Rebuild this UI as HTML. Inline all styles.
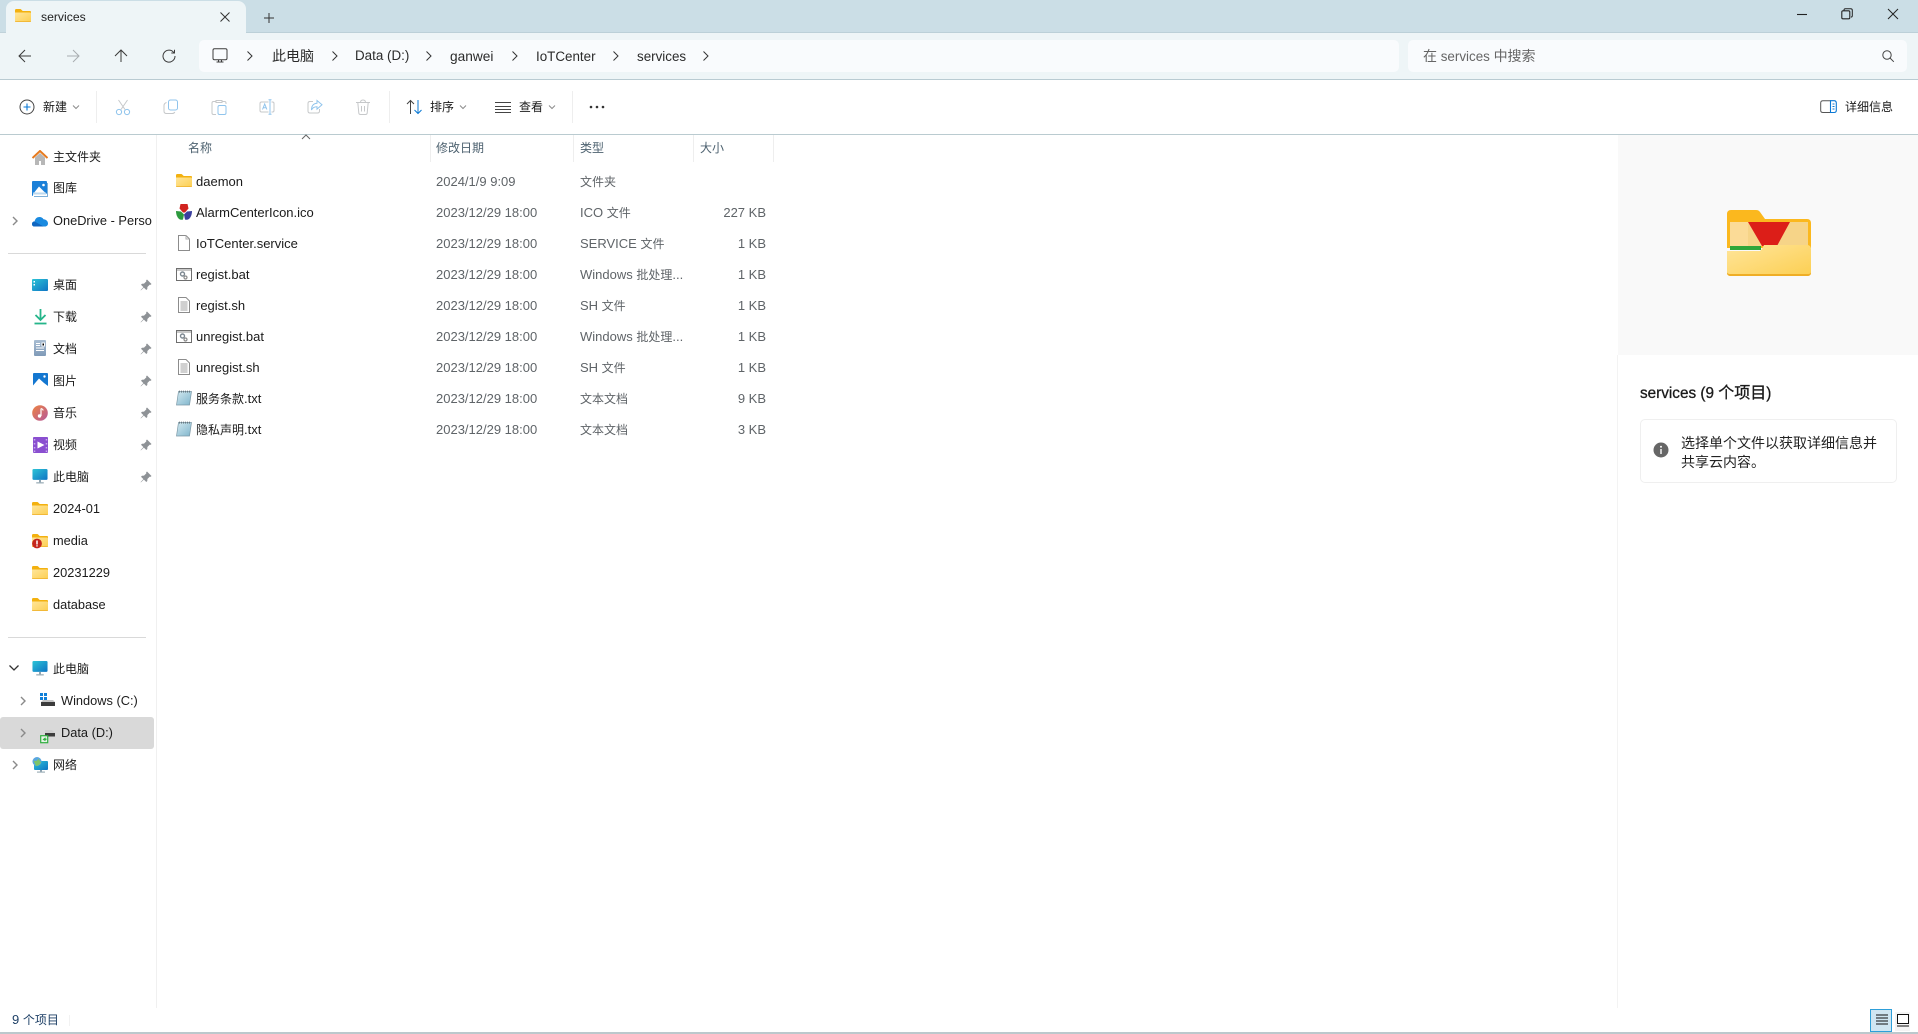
<!DOCTYPE html>
<html lang="zh"><head><meta charset="utf-8"><title>services</title>
<style>
html,body{margin:0;padding:0}
body{width:1918px;height:1034px;overflow:hidden;background:#fff;position:relative;font-family:"Liberation Sans","Noto Sans CJK SC",sans-serif;font-size:13px;color:#1b1b1b}
div,svg,span.t{position:absolute}
.t{white-space:nowrap;line-height:20px;height:20px}
.c{font-size:12px}
.g{color:#5f6468}
.h{color:#4e6270}
.n{font-size:12.800px}
.a{font-size:13.400px;color:#2b2b2b}
.a .z{font-size:14px}
.s{background:#eeeeee;width:1px}
.hr{background:#d9d9d9;height:1px;left:8px;width:138px}
</style></head><body>
<svg width="0" height="0" style="position:absolute">
<defs>
<linearGradient id="fg" x1="0" y1="0" x2="1" y2="1"><stop offset="0" stop-color="#ffe59a"/><stop offset="1" stop-color="#fccf52"/></linearGradient>
<linearGradient id="mon" x1="0" y1="0" x2="1" y2="1"><stop offset="0" stop-color="#2cc4d6"/><stop offset="1" stop-color="#0f74c4"/></linearGradient>
<linearGradient id="mus" x1="0" y1="0" x2="1" y2="1"><stop offset="0" stop-color="#ee8340"/><stop offset="1" stop-color="#b5589c"/></linearGradient>
<linearGradient id="doc" x1="0" y1="0" x2="0" y2="1"><stop offset="0" stop-color="#a9bdd2"/><stop offset="1" stop-color="#7f9ab8"/></linearGradient>
<linearGradient id="txt" x1="0" y1="0" x2="1" y2="1"><stop offset="0" stop-color="#d3e9f0"/><stop offset="1" stop-color="#7fb5cc"/></linearGradient>
<symbol id="folder" viewBox="0 0 16 13"><path d="M0 1.200C0 .5.5 0 1.200 0h4c.4 0 .7.2 1 .5L7.700 2H15c.6 0 1 .4 1 1v2H0z" fill="#f3b10f"/><path d="M0 3.500h15c.6 0 1 .4 1 1V12c0 .6-.4 1-1 1H1c-.6 0-1-.4-1-1z" fill="url(#fg)"/><path d="M0 12.200h16V12.200c0 .5-.4.8-1 .8H1c-.6 0-1-.3-1-.8z" fill="#eeb02a"/></symbol>
<symbol id="pin" viewBox="0 0 12 12"><path d="M7 .5 11.500 5 10.600 5.900 9.800 5.600 7.400 8 7.300 10 6.300 11 3.900 8.600.9 11.400.6 11.100 3.400 8.100 1 5.700 2 4.700 4 4.600 6.400 2.200 6.100 1.400z" fill="#8e9296"/></symbol>
<symbol id="chev" viewBox="0 0 10 10"><path d="M3 1 7 5 3 9" fill="none" stroke="#8a8a8a" stroke-width="1.400"/></symbol>
<symbol id="bc" viewBox="0 0 10 12"><path d="M2.500 1.500 7 6 2.500 10.500" fill="none" stroke="#333" stroke-width="1"/></symbol>
<symbol id="dd" viewBox="0 0 8 6"><path d="M1 1.500 4 4.500 7 1.500" fill="none" stroke="#8c8c8c" stroke-width="1"/></symbol>
<symbol id="pc" viewBox="0 0 16 17"><rect x="0" y="0" width="16" height="11.500" rx="1.200" fill="url(#mon)"/><rect x="7" y="11.500" width="2" height="3" fill="#8aa0ad"/><rect x="4" y="14" width="8" height="1.400" fill="#9fb0ba"/></symbol>
<symbol id="bat" viewBox="0 0 16 13"><rect x=".5" y=".5" width="15" height="12" fill="#fff" stroke="#6e6e6e"/><rect x="1" y="1" width="14" height="2" fill="#c9c9c9"/><circle cx="6.500" cy="6" r="2" fill="none" stroke="#7c8790" stroke-width="1.400"/><circle cx="9.500" cy="9.500" r="1.500" fill="none" stroke="#8b8b8b" stroke-width="1.200"/></symbol>
<symbol id="sh" viewBox="0 0 12 16"><path d="M.5.500h7.500l3.500 3.500v11.500H.5z" fill="#fff" stroke="#8c8c8c"/><path d="M2.500 5h7M2.500 7h7M2.500 9h7M2.500 11h7M2.500 13h7" stroke="#a0a0a0"/></symbol>
<symbol id="note" viewBox="0 0 16 16"><path d="M2.500 1.500H15.500L13.500 15H.5z" fill="url(#txt)" stroke="#7b98a6" stroke-width=".7"/><path d="M3.500 .6v2M5.500 .6v2M7.500 .6v2M9.500 .6v2M11.500 .6v2M13.500 .6v2" stroke="#5e6d75" stroke-width=".8"/></symbol>
</defs></svg>

<!-- title bar -->
<div style="left:0;top:0;width:1918px;height:32px;background:#cbdee6"></div>
<div style="left:6px;top:1px;width:240px;height:32px;background:#eef5f7;border-radius:8px 8px 0 0"></div>
<svg style="left:15px;top:9px" width="16" height="13"><use href="#folder"/></svg>
<span class="t" style="left:41px;top:7px;font-size:12.200px;color:#222">services</span>
<svg style="left:219px;top:11px" width="12" height="12"><path d="M1.500 1.500l9 9m0-9l-9 9" stroke="#333" stroke-width="1"/></svg>
<svg style="left:263px;top:12px" width="12" height="12"><path d="M6 1v10M1 6h10" stroke="#333" stroke-width="1"/></svg>
<svg style="left:1796px;top:9px" width="12" height="12"><path d="M1 5.500h10" stroke="#222" stroke-width="1.100"/></svg>
<svg style="left:1841px;top:8px" width="12" height="12"><path d="M3 2.500V2c0-.8.5-1.300 1.300-1.300h5.400c1 0 1.600.6 1.600 1.600v5.400c0 .8-.5 1.300-1.300 1.300" fill="none" stroke="#222"/><rect x=".8" y="2.800" width="8" height="8" rx="1.200" fill="none" stroke="#222" stroke-width="1.100"/></svg>
<svg style="left:1887px;top:8px" width="12" height="12"><path d="M1 1l10 10m0-10L1 11" stroke="#222" stroke-width="1"/></svg>

<!-- address row -->
<div style="left:0;top:32px;width:1918px;height:47px;background:#eef5f7"></div>
<div style="left:0;top:32px;width:6px;height:1px;background:#c0d2da"></div>
<div style="left:246px;top:32px;width:1672px;height:1px;background:#bcd0d8"></div>
<div style="left:0;top:79px;width:1918px;height:1px;background:#b9cbd2"></div>
<svg style="left:18px;top:49px" width="14" height="14"><path d="M13 7H1.500M7 1 1 7l6 6" fill="none" stroke="#3a3a3a" stroke-width="1"/></svg>
<svg style="left:66px;top:49px" width="14" height="14"><path d="M1 7h11.500M7 1l6 6-6 6" fill="none" stroke="#a8adb0" stroke-width="1"/></svg>
<svg style="left:114px;top:49px" width="14" height="14"><path d="M7 13V1.500M1 7l6-6 6 6" fill="none" stroke="#3a3a3a" stroke-width="1"/></svg>
<svg style="left:162px;top:49px" width="14" height="14"><path d="M11.800 3.500A6 6 0 1 0 13 7M12.500 .8v3.200H9.300" fill="none" stroke="#3a3a3a" stroke-width="1"/></svg>
<div style="left:199px;top:40px;width:1200px;height:32px;background:#f9fbfd;border-radius:5px"></div>
<svg style="left:212px;top:48px" width="16" height="16"><rect x="1" y=".8" width="14" height="11" rx="1.500" fill="none" stroke="#3d3d3d"/><path d="M4.500 14h7M6.500 12v2M9.500 12v2" stroke="#3d3d3d"/></svg>
<svg style="left:245px;top:50px" width="10" height="12"><use href="#bc"/></svg>
<span class="t a" style="left:272px;top:46px"><span class="z">此电脑</span></span>
<svg style="left:330px;top:50px" width="10" height="12"><use href="#bc"/></svg>
<span class="t a" style="left:355px;top:46px">Data (D:)</span>
<svg style="left:424px;top:50px" width="10" height="12"><use href="#bc"/></svg>
<span class="t a" style="left:450px;top:46px;font-size:13.700px;top:47px">ganwei</span>
<svg style="left:510px;top:50px" width="10" height="12"><use href="#bc"/></svg>
<span class="t a" style="left:536px;top:47px">IoTCenter</span>
<svg style="left:611px;top:50px" width="10" height="12"><use href="#bc"/></svg>
<span class="t a" style="left:637px;top:47px">services</span>
<svg style="left:701px;top:50px" width="10" height="12"><use href="#bc"/></svg>
<div style="left:1408px;top:40px;width:499px;height:32px;background:#f9fbfd;border-radius:5px"></div>
<span class="t" style="left:1423px;top:46px;font-size:13.400px;color:#666"><span style="font-size:14px">在</span> services <span style="font-size:14px">中搜索</span></span>
<svg style="left:1881px;top:49px" width="14" height="14"><circle cx="6" cy="6" r="4.200" fill="none" stroke="#444"/><path d="M9 9l3.800 3.800" stroke="#444"/></svg>

<!-- toolbar -->
<div style="left:0;top:134px;width:1918px;height:1px;background:#bacbd0"></div>
<svg style="left:19px;top:99px" width="16" height="16"><circle cx="8" cy="8" r="7" fill="none" stroke="#444" stroke-width="1"/><path d="M8 4.500v7M4.500 8h7" stroke="#0a78d4" stroke-width="1.100"/></svg>
<span class="t" style="left:43px;top:97px;font-size:12px">新建</span>
<svg style="left:72px;top:104px" width="8" height="6"><use href="#dd"/></svg>
<div class="s" style="left:96px;top:91px;height:32px"></div>
<svg style="left:115px;top:99px" width="16" height="17"><path d="M3.500 1 10 10.500M12.500 1 6 10.500" stroke="#c6c8ca" fill="none"/><circle cx="4" cy="13" r="2.600" fill="none" stroke="#90c4ec"/><circle cx="12" cy="13" r="2.600" fill="none" stroke="#90c4ec"/></svg>
<svg style="left:163px;top:99px" width="16" height="16"><rect x="5.500" y="1" width="9" height="10" rx="2" fill="none" stroke="#90c4ec"/><path d="M3.500 3.500C2 4 1 5 1 6.500V12c0 1.500 1 2.500 2.500 2.500H9c1.500 0 2.500-.8 2.800-1.500" fill="none" stroke="#c6c8ca"/></svg>
<svg style="left:211px;top:99px" width="16" height="17"><path d="M5 2.500H2.500C1.500 2.500 1 3 1 4v10c0 1 .5 1.500 1.500 1.500H5M5 1.500h6v2H5zM11 2.500h2.500c1 0 1.500.5 1.500 1.500v1" fill="none" stroke="#c6c8ca"/><rect x="7" y="6.500" width="8" height="9" rx="1.500" fill="none" stroke="#90c4ec"/></svg>
<svg style="left:259px;top:99px" width="16" height="16"><path d="M9.500 3H2.500C1.500 3 1 3.500 1 4.500v7c0 1 .5 1.500 1.500 1.500H9.500M12.500 3h1c1 0 1.500.5 1.500 1.500v7c0 1-.5 1.500-1.500 1.500h-1" fill="none" stroke="#c6c8ca"/><path d="M11 1v14M9.500 .7h3M9.500 15.300h3" stroke="#90c4ec" fill="none"/><path d="M3.500 10.500 5.700 5l2.200 5.500M4.300 8.800h2.800" fill="none" stroke="#90c4ec"/></svg>
<svg style="left:307px;top:99px" width="16" height="16"><path d="M6 2.500H3C1.800 2.500 1 3.300 1 4.500v7.500c0 1.200.8 2 2 2h7.500c1.200 0 2-.8 2-2v-2" fill="none" stroke="#c6c8ca"/><path d="M10 1.500l5 4.300-5 4.300V7.800C7.500 7.800 5.500 8.800 4.500 11c0-4 2-6.500 5.500-6.800z" fill="none" stroke="#90c4ec"/></svg>
<svg style="left:355px;top:99px" width="16" height="17"><path d="M1 3.500h14M5.500 3.500c0-1.500 1-2.500 2.500-2.500s2.500 1 2.500 2.500M2.800 3.500l1 10.500c.1 1 .7 1.500 1.700 1.500h5c1 0 1.600-.5 1.700-1.500l1-10.500M6.500 7v5.500M9.500 7v5.500" fill="none" stroke="#c6c8ca"/></svg>
<div class="s" style="left:389px;top:91px;height:32px"></div>
<svg style="left:406px;top:99px" width="17" height="16"><path d="M4.500 15V1.500M1 5l3.500-3.500L8 5" fill="none" stroke="#444"/><path d="M12 1v13.500M8.500 11l3.500 3.500 3.500-3.500" fill="none" stroke="#0a78d4"/></svg>
<span class="t" style="left:430px;top:97px;font-size:12px">排序</span>
<svg style="left:459px;top:104px" width="8" height="6"><use href="#dd"/></svg>
<svg style="left:495px;top:101px" width="16" height="12"><path d="M0 1.500h16M0 5.500h16M0 8.500h16M0 11.500h16" stroke="#444" stroke-width="1"/></svg>
<span class="t" style="left:519px;top:97px;font-size:12px">查看</span>
<svg style="left:548px;top:104px" width="8" height="6"><use href="#dd"/></svg>
<div class="s" style="left:572px;top:91px;height:32px"></div>
<svg style="left:588px;top:105px" width="18" height="4"><circle cx="3" cy="2" r="1.300" fill="#333"/><circle cx="9" cy="2" r="1.300" fill="#333"/><circle cx="15" cy="2" r="1.300" fill="#333"/></svg>
<svg style="left:1820px;top:100px" width="17" height="14"><path d="M11 .7H3C1.500.7.700 1.500.700 3v7.500c0 1.500.8 2 2.300 2h8" fill="none" stroke="#555"/><path d="M10.500.7h3.500c1.500 0 2.300.8 2.300 2.300v7.500c0 1.500-.8 2-2.300 2h-3.500z" fill="none" stroke="#0a78d4" stroke-width="1.100"/><path d="M12.500 4h2M12.500 6.500h2M12.500 9h2" stroke="#0a78d4"/></svg>
<span class="t" style="left:1845px;top:97px;font-size:12px">详细信息</span>

<!-- nav pane -->
<div style="left:156px;top:135px;width:1px;height:873px;background:#f0f0f0"></div>
<svg style="left:32px;top:150px" width="16" height="16"><path d="M3 7.500V15h4v-4h2v4h4V7.500L8 3z" fill="#b7b7b7"/><path d="M.5 8 8 1l7.500 7" fill="none" stroke="#e67a1e" stroke-width="2"/></svg>
<span class="t c" style="left:53px;top:147px">主文件夹</span>
<svg style="left:32px;top:181px" width="16" height="16"><rect width="15" height="15" rx="1" fill="#1b80d8"/><path d="M1 13 7 5.500 12 10.500 15 13v2H1z" fill="#fff"/><circle cx="11.500" cy="4" r="1.300" fill="#fff"/><path d="M15 2h1v14H2v-1h13z" fill="#7fb0d8"/><path d="M1 11.500h13v2H1z" fill="#bcd8ee"/></svg>
<span class="t c" style="left:53px;top:178px">图库</span>
<svg style="left:10px;top:216px" width="10" height="10"><use href="#chev"/></svg>
<svg style="left:32px;top:215px" width="16" height="12"><path d="M2.500 11.500C1 11.500 0 10.500 0 9c0-1.500 1-2.500 2.600-2.600C3.200 3.500 5 2 7.500 2c1.800 0 3.200.8 4 2.300 2.400 0 4.500 1.800 4.500 4.200 0 1.800-1.300 3-3 3z" fill="#1a8ae0"/><path d="M2.500 11.500C1 11.500 0 10.500 0 9c0-1.500 1-2.500 2.600-2.500l9 5z" fill="#0f66c0"/></svg>
<span class="t n" style="left:53px;top:211px">OneDrive - Perso</span>
<div class="hr" style="top:253px"></div>
<svg style="left:32px;top:279px" width="16" height="12"><rect width="16" height="12" rx="1" fill="url(#mon)"/><path d="M1.500 2h1.500v1.500H1.500zM1.500 5h1.500v1.500H1.500z" fill="#fff"/></svg>
<span class="t c" style="left:53px;top:275px">桌面</span>
<svg style="left:140px;top:279px" width="12" height="12"><use href="#pin"/></svg>
<svg style="left:34px;top:309px" width="13" height="16"><path d="M6.500 0v10.500M1.500 6 6.500 11l5-5" fill="none" stroke="#25b58a" stroke-width="1.800"/><path d="M.5 14.500h12" stroke="#25b58a" stroke-width="1.800"/></svg>
<span class="t c" style="left:53px;top:307px">下载</span>
<svg style="left:140px;top:311px" width="12" height="12"><use href="#pin"/></svg>
<svg style="left:34px;top:340px" width="12" height="16"><rect width="12" height="16" rx="1" fill="url(#doc)"/><path d="M2 3.500h4M2 5.500h4M8 3h2.500v3H8zM2 8h8M2 10.500h8" stroke="#fff"/></svg>
<span class="t c" style="left:53px;top:339px">文档</span>
<svg style="left:140px;top:343px" width="12" height="12"><use href="#pin"/></svg>
<svg style="left:33px;top:373px" width="15" height="15"><rect width="15" height="15" rx="1" fill="#1477d0"/><path d="M0 12.500 6 5.500 11 10 15 13v2H0z" fill="#fff"/><circle cx="11.500" cy="3.500" r="1.200" fill="#fff"/></svg>
<span class="t c" style="left:53px;top:371px">图片</span>
<svg style="left:140px;top:375px" width="12" height="12"><use href="#pin"/></svg>
<svg style="left:32px;top:405px" width="16" height="16"><circle cx="8" cy="8" r="7.800" fill="url(#mus)"/><path d="M9 3.500v7.500" stroke="#fff" stroke-width="1.200"/><path d="M9 3.500c1 .2 2 1 2.200 2" stroke="#fff" fill="none"/><circle cx="7.500" cy="11" r="1.700" fill="#fff"/></svg>
<span class="t c" style="left:53px;top:403px">音乐</span>
<svg style="left:140px;top:407px" width="12" height="12"><use href="#pin"/></svg>
<svg style="left:33px;top:437px" width="15" height="16"><rect width="15" height="16" rx="1" fill="#8a4fd0"/><path d="M4.500 4.500 11.500 8l-7 3.500z" fill="#fff"/><path d="M.8 2h1.500v1.500H.8zM.8 6h1.500v1.500H.8zM.8 10h1.500v1.500H.8zM.8 13.500h1.500V15H.8zM12.700 2h1.500v1.500h-1.500zM12.700 6h1.500v1.500h-1.500zM12.700 10h1.500v1.500h-1.500zM12.700 13.500h1.500V15h-1.500z" fill="#c9a9ee"/></svg>
<span class="t c" style="left:53px;top:435px">视频</span>
<svg style="left:140px;top:439px" width="12" height="12"><use href="#pin"/></svg>
<svg style="left:32px;top:469px" width="16" height="16"><use href="#pc"/></svg>
<span class="t c" style="left:53px;top:467px">此电脑</span>
<svg style="left:140px;top:471px" width="12" height="12"><use href="#pin"/></svg>
<svg style="left:32px;top:502px" width="16" height="13"><use href="#folder"/></svg>
<span class="t n" style="left:53px;top:499px">2024-01</span>
<svg style="left:32px;top:534px" width="16" height="13"><use href="#folder"/></svg>
<svg style="left:32px;top:538px" width="11" height="11"><circle cx="5" cy="5.500" r="4.900" fill="#c4261d"/><path d="M5 2.500v4" stroke="#fff" stroke-width="1.500"/><path d="M5 7.300v1.200" stroke="#fff" stroke-width="1.500"/></svg>
<span class="t n" style="left:53px;top:531px">media</span>
<svg style="left:32px;top:566px" width="16" height="13"><use href="#folder"/></svg>
<span class="t n" style="left:53px;top:563px">20231229</span>
<svg style="left:32px;top:598px" width="16" height="13"><use href="#folder"/></svg>
<span class="t n" style="left:53px;top:595px">database</span>
<div class="hr" style="top:637px"></div>
<svg style="left:8px;top:664px" width="12" height="8"><path d="M1.500 1.500 6 6l4.500-4.500" fill="none" stroke="#333" stroke-width="1.300"/></svg>
<svg style="left:32px;top:661px" width="16" height="16"><use href="#pc"/></svg>
<span class="t c" style="left:53px;top:659px">此电脑</span>
<svg style="left:18px;top:696px" width="10" height="10"><use href="#chev"/></svg>
<svg style="left:40px;top:693px" width="16" height="15"><path d="M0 0h3v3H0zM4 0h3v3H4zM0 4h3v3H0zM4 4h3v3H4z" fill="#0f7fd8"/><rect x="1" y="9" width="14" height="4" fill="#3c3c3c"/><path d="M1 9h14l-2-2H3z" fill="#c4c4c4"/></svg>
<span class="t n" style="left:61px;top:691px">Windows (C:)</span>
<div style="left:0;top:717px;width:154px;height:32px;background:#d9d9d9;border-radius:3px"></div>
<svg style="left:18px;top:728px" width="10" height="10"><use href="#chev"/></svg>
<svg style="left:40px;top:729px" width="16" height="15"><path d="M5 1h7l3 3H5z" fill="#cfcfcf"/><rect x="5" y="4" width="10" height="3.500" fill="#3c3c3c"/><rect x=".7" y="6.700" width="7" height="7" fill="#e7f3e7" stroke="#2fae3f" stroke-width="1.200"/><path d="M2.500 10.500 5.500 8.200v1.300h1v1.500h-1v1.300z" fill="#2fae3f"/></svg>
<span class="t n" style="left:61px;top:723px">Data (D:)</span>
<svg style="left:10px;top:760px" width="10" height="10"><use href="#chev"/></svg>
<svg style="left:32px;top:757px" width="16" height="16"><rect x="2" y="4" width="14" height="9" rx="1" fill="url(#mon)"/><rect x="8" y="13" width="2" height="2" fill="#8aa0ad"/><rect x="5" y="14.500" width="8" height="1.200" fill="#9fb0ba"/><circle cx="5" cy="4.500" r="4.500" fill="#5aa6e0"/><path d="M1.500 3.500c2 1 4 .5 5-2 1 1.500 1.500 3 2.500 3.500-1 3-3 4-5 4z" fill="#7cc46a"/></svg>
<span class="t c" style="left:53px;top:755px">网络</span>

<!-- column header -->
<svg style="left:301px;top:134px" width="10" height="6"><path d="M1 5l4-4 4 4" fill="none" stroke="#666"/></svg>
<span class="t c h" style="left:188px;top:138px">名称</span>
<span class="t c h" style="left:436px;top:138px">修改日期</span>
<span class="t c h" style="left:580px;top:138px">类型</span>
<span class="t c h" style="left:700px;top:138px">大小</span>
<div class="s" style="left:430px;top:135px;height:27px"></div>
<div class="s" style="left:573px;top:135px;height:27px"></div>
<div class="s" style="left:693px;top:135px;height:27px"></div>
<div class="s" style="left:773px;top:135px;height:27px"></div>

<!-- rows -->
<svg style="left:176px;top:174px" width="16" height="13"><use href="#folder"/></svg>
<span class="t" style="left:196px;top:172px">daemon</span>
<span class="t g" style="left:436px;top:172px">2024/1/9 9:09</span>
<span class="t g c" style="left:580px;top:172px">文件夹</span>

<svg style="left:176px;top:204px" width="16" height="17"><path d="M4.500 0h7l1 4.500-3.500 4h-2L3.500 4.500z" fill="#d1231f"/><path d="M0 7l5 .5 3 3-1 5c-4 1.500-7-3-7-8.500z" fill="#2d9a3e"/><path d="M16 7l-5 .5-3 3 1 5c4 1.500 7-3 7-8.500z" fill="#3a3f9e"/></svg>
<span class="t" style="left:196px;top:203px">AlarmCenterIcon.ico</span>
<span class="t g" style="left:436px;top:203px">2023/12/29 18:00</span>
<span class="t g" style="left:580px;top:203px">ICO <span class="c">文件</span></span>
<span class="t g" style="right:1152px;top:203px">227 KB</span>

<svg style="left:178px;top:235px" width="12" height="16"><path d="M.5.500h7.500l3.500 3.500v11.500H.5z" fill="#fff" stroke="#8c8c8c"/><path d="M8 .5V4h3.500" fill="none" stroke="#b0b0b0"/></svg>
<span class="t" style="left:196px;top:234px">IoTCenter.service</span>
<span class="t g" style="left:436px;top:234px">2023/12/29 18:00</span>
<span class="t g" style="left:580px;top:234px">SERVICE <span class="c">文件</span></span>
<span class="t g" style="right:1152px;top:234px">1 KB</span>

<svg style="left:176px;top:268px" width="16" height="13"><use href="#bat"/></svg>
<span class="t" style="left:196px;top:265px">regist.bat</span>
<span class="t g" style="left:436px;top:265px">2023/12/29 18:00</span>
<span class="t g" style="left:580px;top:265px">Windows <span class="c">批处理</span>...</span>
<span class="t g" style="right:1152px;top:265px">1 KB</span>

<svg style="left:178px;top:297px" width="12" height="16"><use href="#sh"/></svg>
<span class="t" style="left:196px;top:296px">regist.sh</span>
<span class="t g" style="left:436px;top:296px">2023/12/29 18:00</span>
<span class="t g" style="left:580px;top:296px">SH <span class="c">文件</span></span>
<span class="t g" style="right:1152px;top:296px">1 KB</span>

<svg style="left:176px;top:330px" width="16" height="13"><use href="#bat"/></svg>
<span class="t" style="left:196px;top:327px">unregist.bat</span>
<span class="t g" style="left:436px;top:327px">2023/12/29 18:00</span>
<span class="t g" style="left:580px;top:327px">Windows <span class="c">批处理</span>...</span>
<span class="t g" style="right:1152px;top:327px">1 KB</span>

<svg style="left:178px;top:359px" width="12" height="16"><use href="#sh"/></svg>
<span class="t" style="left:196px;top:358px">unregist.sh</span>
<span class="t g" style="left:436px;top:358px">2023/12/29 18:00</span>
<span class="t g" style="left:580px;top:358px">SH <span class="c">文件</span></span>
<span class="t g" style="right:1152px;top:358px">1 KB</span>

<svg style="left:176px;top:390px" width="16" height="16"><use href="#note"/></svg>
<span class="t" style="left:196px;top:389px"><span class="c">服务条款</span>.txt</span>
<span class="t g" style="left:436px;top:389px">2023/12/29 18:00</span>
<span class="t g c" style="left:580px;top:389px">文本文档</span>
<span class="t g" style="right:1152px;top:389px">9 KB</span>

<svg style="left:176px;top:421px" width="16" height="16"><use href="#note"/></svg>
<span class="t" style="left:196px;top:420px"><span class="c">隐私声明</span>.txt</span>
<span class="t g" style="left:436px;top:420px">2023/12/29 18:00</span>
<span class="t g c" style="left:580px;top:420px">文本文档</span>
<span class="t g" style="right:1152px;top:420px">3 KB</span>

<!-- details -->
<div style="left:1618px;top:135px;width:300px;height:220px;background:#f9f9f9"></div>
<div style="left:1617px;top:355px;width:1px;height:653px;background:#f3f3f3"></div>
<svg style="left:1727px;top:210px" width="84" height="66" viewBox="0 0 84 66">
<path d="M0 4C0 1.500 1.500 0 4 0h25c2 0 3 .6 4 2l5 7h42c2.500 0 4 1.500 4 4v25H0z" fill="#fbb81e"/>
<rect x="3" y="12" width="78" height="24" fill="#f6d488"/>
<path d="M3 12h18v24H3z" fill="#fbdb97"/>
<path d="M21 12h42L50 36H35z" fill="#dc1e18"/>
<path d="M3 36h31v4H3z" fill="#2ea63a"/>
<path d="M0 41h33l2-2 2-4h43c2.500 0 4 1.500 4 4v23c0 2.500-1.500 4-4 4H4c-2.500 0-4-1.500-4-4z" fill="url(#fg)"/>
<path d="M0 62v1c0 2 1.500 3 4 3h76c2.500 0 4-1 4-3v-1c0 1-1 2-3 2H3c-2 0-3-1-3-2z" fill="#efae26"/>
</svg>
<span class="t" style="left:1640px;top:384px;font-size:15.300px;color:#1b1b1b;-webkit-text-stroke:.3px #1b1b1b">services (9 <span style="font-size:16px">个项目</span>)</span>
<div style="left:1640px;top:419px;width:255px;height:62px;border:1px solid #efefef;border-radius:5px;background:#fff"></div>
<svg style="left:1653px;top:442px" width="16" height="16"><circle cx="8" cy="8" r="7.500" fill="#666"/><path d="M8 7v5" stroke="#fff" stroke-width="1.400"/><circle cx="8" cy="4.700" r="1" fill="#fff"/></svg>
<span class="t" style="left:1681px;top:433px;font-size:14px;color:#222">选择单个文件以获取详细信息并</span>
<span class="t" style="left:1681px;top:452px;font-size:14px;color:#222">共享云内容。</span>

<!-- status bar -->
<span class="t" style="left:12px;top:1010px;color:#1d3f66">9 <span class="c">个项目</span></span>
<div style="left:69px;top:1015px;width:1px;height:11px;background:#f2f2f2"></div>
<div style="left:0;top:1032px;width:1918px;height:2px;background:#bcc8cc"></div>
<div style="left:1870px;top:1009px;width:20px;height:21px;background:#cfe5f2;border:1px solid #2e9fd9"></div>
<svg style="left:1876px;top:1014px" width="12" height="12"><path d="M0 1h12M0 4h12M0 7h12M0 10h12" stroke="#111" stroke-width="1.100"/></svg>
<div style="left:1895px;top:1012px;width:15px;height:19px;background:#f4f4f4"></div>
<svg style="left:1897px;top:1014px" width="12" height="13"><rect x=".5" y=".5" width="11" height="9" fill="#fff" stroke="#111"/><path d="M0 12h12" stroke="#111"/></svg>
</body></html>
